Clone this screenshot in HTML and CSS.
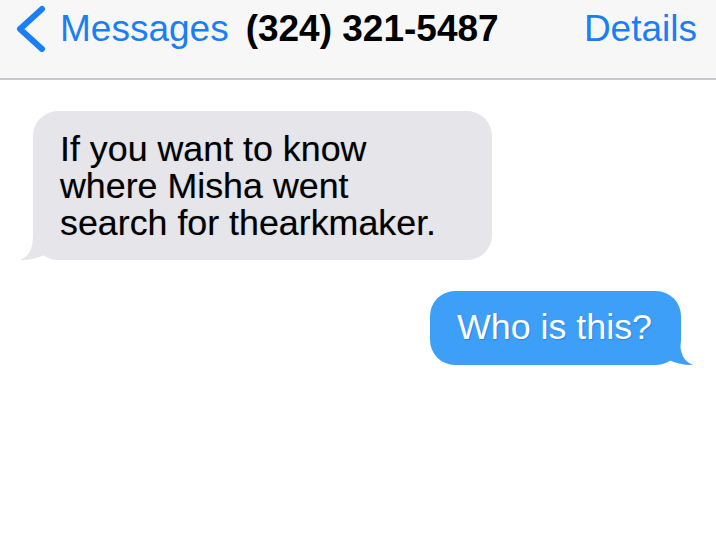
FILE: index.html
```html
<!DOCTYPE html>
<html lang="en">
<head>
<meta charset="utf-8">
<title>Messages</title>
<link rel="stylesheet" href="styles.css">
</head>
<body>
<header class="nav">
  <svg class="chevron" width="34" height="48" viewBox="0 0 34 48" aria-hidden="true">
    <path d="M28 5 L6 25 L28 45" fill="none" stroke="#1a7ff6" stroke-width="6" stroke-linecap="round" stroke-linejoin="round"/>
  </svg>
  <span class="back">Messages</span>
  <span class="title">(324) 321-5487</span>
  <span class="details">Details</span>
</header>
<main class="thread">
  <div class="bubble incoming">
    If you want to know<br>where Misha went<br>search for thearkmaker.
    <svg class="tail tail-left" width="44" height="26" viewBox="0 0 44 26" aria-hidden="true">
      <path d="M14 0 C14 14 11 22 1 26 Q16 26 27 20 Q34 26 44 26 L44 0 Z" fill="#e5e5ea"/>
    </svg>
  </div>
  <div class="bubble outgoing">
    Who is this?
    <svg class="tail tail-right" width="44" height="26" viewBox="0 0 44 26" aria-hidden="true">
      <path d="M30 0 C30 14 33 22 43 26 Q28 26 17 20 Q10 26 0 26 L0 0 Z" fill="#3d9ff7"/>
    </svg>
  </div>
</main>
</body>
</html>
```

FILE: styles.css
```css
html, body {
  margin: 0;
  padding: 0;
  background: #ffffff;
}

body {
  width: 716px;
  height: 550px;
  overflow: hidden;
  font-family: "Liberation Sans", Arial, sans-serif;
}

.nav {
  box-sizing: border-box;
  height: 80px;
  display: flex;
  align-items: center;
  padding: 0 19px 22px 14px;
  background: #f7f7f7;
  border-bottom: 2px solid #c8c7cc;
  font-size: 37px;
  line-height: 37px;
}

.chevron {
  flex: none;
  margin-right: 12px;
}

.back {
  color: #1a7ff6;
}

.title {
  margin-left: 17px;
  font-weight: bold;
  color: #000000;
}

.details {
  margin-left: auto;
  color: #1a7ff6;
}

.thread {
  display: flex;
  flex-direction: column;
  gap: 31px;
  padding: 31px 35px 0 33px;
}

.bubble {
  position: relative;
  box-sizing: border-box;
  border-radius: 25px;
  font-size: 35.8px;
  line-height: 37px;
  padding-left: 27px;
}

.incoming {
  align-self: flex-start;
  width: 459px;
  padding-top: 20px;
  padding-bottom: 18px;
  background: #e5e5ea;
  color: #000000;
  text-shadow: 0 0 1px rgba(0, 0, 0, 0.3);
}

.outgoing {
  align-self: flex-end;
  width: 251px;
  padding-top: 18px;
  padding-bottom: 19px;
  background: #3d9ff7;
  color: #ffffff;
  text-shadow: 1px 1px 1px rgba(20, 110, 220, 0.5);
}

.tail {
  position: absolute;
  bottom: 0;
}

.tail-left {
  left: -14px;
}

.tail-right {
  right: -13px;
}
```
